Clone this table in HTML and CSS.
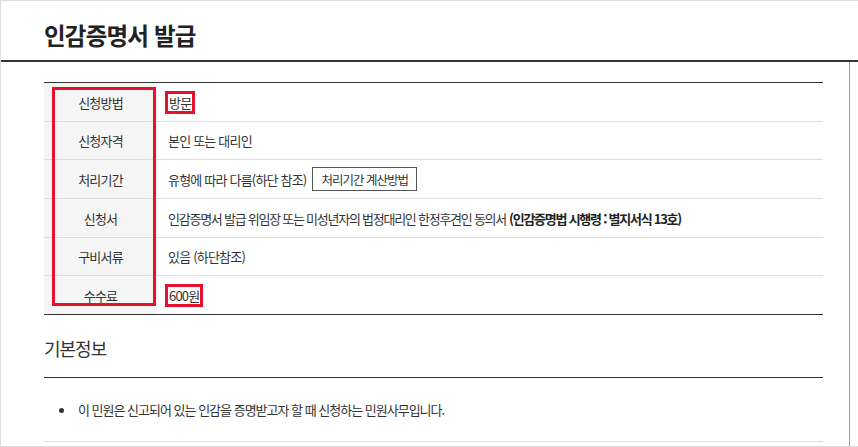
FILE: index.html
```html
<!DOCTYPE html>
<html lang="ko">
<head>
<meta charset="utf-8">
<link rel="stylesheet" href="styles.css">
</head>
<body>
<div class="frame">
  <h1 class="title">인감증명서 발급</h1>
  <div class="content">
    <div class="info">
      <div class="row"><div class="th">신청방법</div><div class="td"><span class="mark">방문</span></div></div>
      <div class="row short"><div class="th">신청자격</div><div class="td">본인 또는 대리인</div></div>
      <div class="row"><div class="th">처리기간</div><div class="td">유형에 따라 다름(하단 참조)<button class="btn" type="button">처리기간 계산방법</button></div></div>
      <div class="row"><div class="th">신청서</div><div class="td long">인감증명서 발급 위임장 또는 미성년자의 법정대리인 한정후견인 동의서 <b>(인감증명법 시행령 : 별지서식 13호)</b></div></div>
      <div class="row short"><div class="th">구비서류</div><div class="td">있음 (하단참조)</div></div>
      <div class="row"><div class="th">수수료</div><div class="td"><span class="mark">600원</span></div></div>
      <div class="annot"></div>
    </div>
    <h2 class="sub">기본정보</h2>
    <ul class="bullets">
      <li>이 민원은 신고되어 있는 인감을 증명받고자 할 때 신청하는 민원사무입니다.</li>
    </ul>
  </div>
</div>
</body>
</html>
```

FILE: styles.css
```css
html, body {
  margin: 0;
  padding: 0;
  background: #fff;
}
body {
  font-family: "Noto Sans CJK KR", "Noto Sans", sans-serif;
  color: #333;
}
.frame {
  width: 858px;
  height: 447px;
  box-sizing: border-box;
  border: 1px solid #dcdcdc;
  border-right: none;
  overflow: hidden;
}
.title {
  margin: 0;
  height: 61px;
  box-sizing: border-box;
  padding: 17px 0 0 43px;
  line-height: 34px;
  font-size: 23.5px;
  font-weight: 700;
  letter-spacing: -0.8px;
  color: #222;
  border-bottom: 2px solid #333;
}
.content {
  margin-left: 43px;
  width: 805px;
  border-right: 1px solid #999;
  padding-top: 20px;
  height: 400px;
}
.info {
  position: relative;
  width: 779px;
  border-top: 1px solid #333;
  border-bottom: 1px solid #333;
  font-size: 13px;
  letter-spacing: -0.8px;
}
.row {
  display: flex;
  height: 38px;
  border-bottom: 1px solid #ddd;
}
.row.short {
  height: 37px;
}
.row:nth-last-child(2) {
  border-bottom: none;
}
.th {
  width: 113px;
  flex: none;
  background: #f5f5f5;
  display: flex;
  align-items: center;
  justify-content: center;
  color: #333;
}
.td {
  flex: 1;
  display: flex;
  align-items: center;
  padding-left: 11px;
  color: #333;
}
.td.long {
  letter-spacing: -1.25px;
}
.td b {
  font-weight: 700;
  color: #222;
  margin-left: 3px;
}
.mark {
  display: inline-block;
  line-height: 17px;
  padding: 0 1px;
  outline: 3px solid #e8112d;
}
.btn {
  margin-left: 6px;
  height: 24px;
  padding: 0 8px;
  border: 1px solid #555;
  background: #fff;
  font-family: inherit;
  font-size: 12.5px;
  letter-spacing: -1px;
  color: #333;
}
.annot {
  position: absolute;
  left: 8px;
  top: 4px;
  width: 104px;
  height: 219px;
  box-sizing: border-box;
  border: 3px solid #e8112d;
}
.sub {
  margin: 0;
  width: 779px;
  padding: 18px 0 14px;
  line-height: 30px;
  font-size: 18px;
  font-weight: 400;
  letter-spacing: -1px;
  color: #333;
  border-bottom: 1px solid #333;
}
.bullets {
  list-style: none;
  margin: 0;
  padding: 0;
  width: 779px;
  border-bottom: 1px solid #ddd;
}
.bullets li {
  position: relative;
  padding: 22px 0 21px 34px;
  line-height: 20px;
  font-size: 13px;
  letter-spacing: -1px;
  color: #333;
}
.bullets li::before {
  content: "";
  position: absolute;
  left: 15px;
  top: 30px;
  width: 5px;
  height: 5px;
  border-radius: 50%;
  background: #333;
}
```
